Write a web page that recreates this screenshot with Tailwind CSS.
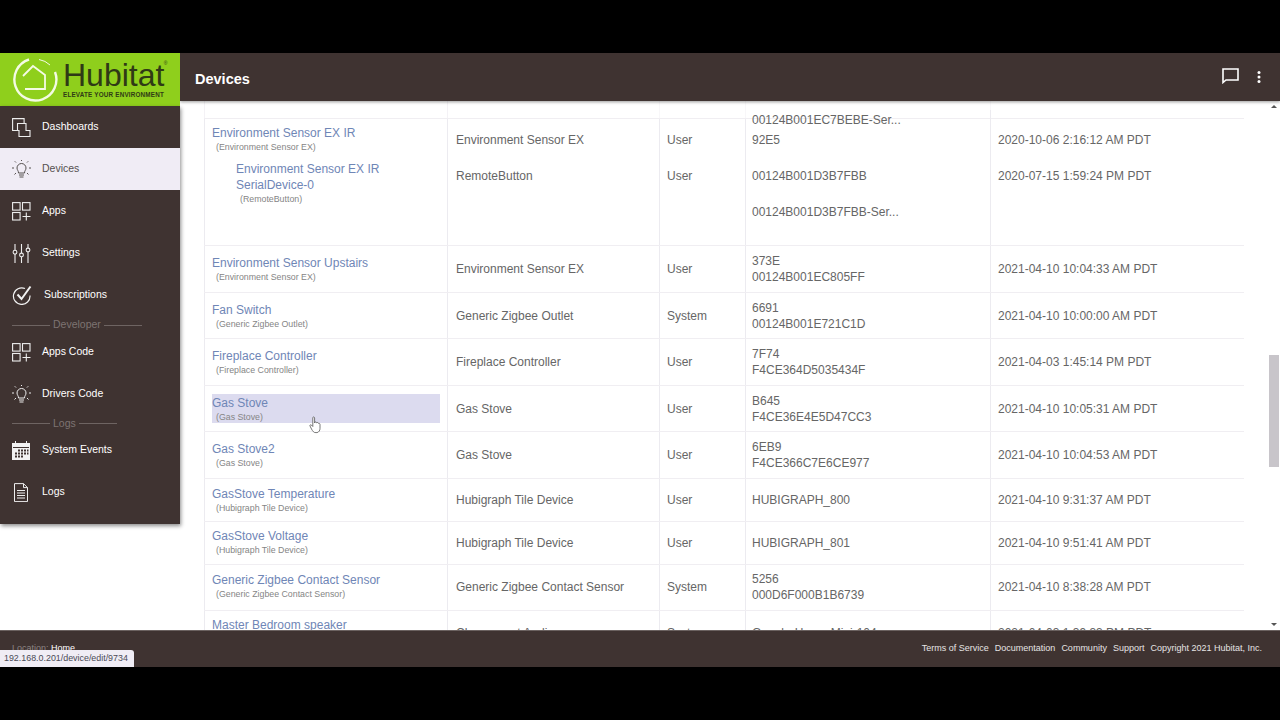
<!DOCTYPE html>
<html lang="en">
<head>
    <meta charset="UTF-8">
    <script src="https://cdn.jsdelivr.net/npm/@tailwindcss/browser@4"></script>
    <title>Devices</title>
</head>
<body class="bg-black font-['Liberation_Sans',Arial,sans-serif]">
<div class="w-[1280px] h-[720px] overflow-hidden pt-[53px]">
  <div class="relative h-[614px] flex flex-col bg-white">
    <div class="flex flex-1 min-h-0">

      <!-- sidebar -->
      <aside class="w-[180px] shrink-0 relative z-20">
        <div class="h-[53px] bg-[#8fcf1c] flex items-center pl-[12px]">
          <svg class="w-[46px] h-[46px] shrink-0" viewBox="0 0 46 46" fill="none" stroke="#f4fbe4">
            <path d="M17 2.500 A21 21 0 1 0 43 15" stroke-width="2.400"/>
            <path d="M27 2.500 A21 21 0 0 1 38 8" stroke-width="1"/>
            <path d="M11 19 L21 9 L33 18 V32 H13" stroke-width="1.800"/>
          </svg>
          <div class="ml-[5px] -mt-[1px] relative text-[#2f3a16]">
            <div class="text-[32px] leading-[32px]">Hubitat</div>
            <div class="text-[6.300px] leading-[8px] font-bold tracking-[0.2px] whitespace-nowrap">ELEVATE YOUR ENVIRONMENT</div>
            <span class="absolute right-[-3px] top-[2px] text-[5px] leading-none">®</span>
          </div>
        </div>
        <nav class="bg-[#3f3331] text-white text-[10.500px] h-[418px] shadow-[1px_2px_4px_rgba(0,0,0,0.45)]">
          <a class="flex items-center h-[42px] pl-[12px]">
            <svg class="w-[19px] h-[19px] mr-[11px]" viewBox="0 0 19 19" fill="none" stroke="#eee" stroke-width="1.100"><path d="M5.500 12.500H.6V.6h11.500v5"/><path d="M5.500 5.500h8.500v7h4v6H7v-6H5.500z"/></svg>
            Dashboards
          </a>
          <a class="flex items-center h-[42px] pl-[12px] bg-[#f0ecf5] text-[#55504f]">
            <svg class="w-[19px] h-[19px] mr-[11px]" viewBox="0 0 19 19" fill="none" stroke="#55504f" stroke-width="1"><path d="M6.500 13c0-2.500-1.500-2.800-1.500-5a4.500 4.500 0 0 1 9 0c0 2.200-1.500 2.500-1.500 5z"/><path d="M7 15h5M7.500 17h4M9.500 1V0M2 8H0M19 8h-2M4 2.500 2.800 1.300M15 2.500l1.200-1.200M4 13l-1.500 1.500M15 13l1.500 1.500"/></svg>
            Devices
          </a>
          <a class="flex items-center h-[42px] pl-[12px]">
            <svg class="w-[19px] h-[19px] mr-[11px]" viewBox="0 0 19 19" fill="none" stroke="#eee" stroke-width="1.100"><rect x=".6" y=".6" width="7.500" height="7.500"/><rect x="10.500" y=".6" width="7.500" height="7.500"/><rect x=".6" y="10.500" width="7.500" height="7.500"/><path d="M14.300 10.500v8M10.500 14.500h8"/></svg>
            Apps
          </a>
          <a class="flex items-center h-[42px] pl-[12px]">
            <svg class="w-[19px] h-[19px] mr-[11px]" viewBox="0 0 19 19" fill="none" stroke="#eee" stroke-width="1.100"><path d="M3 0v6.500M3 10v9M9.500 0v9M9.500 13v6M16 0v4M16 8v11"/><circle cx="3" cy="8.200" r="1.900"/><circle cx="9.500" cy="11" r="1.900"/><circle cx="16" cy="6" r="1.900"/></svg>
            Settings
          </a>
          <a class="flex items-center h-[42px] pl-[12px]">
            <svg class="w-[20px] h-[20px] mr-[12px]" viewBox="0 0 20 20" fill="none" stroke="#f2f2f2"><path d="M13 3.500A8.300 8.300 0 1 0 18 10.500" stroke-width="1.200"/><path d="M5.500 9.500 9.500 14 18.500 1.500" stroke-width="2"/></svg>
            Subscriptions
          </a>
          <div class="flex items-center h-[14px] pl-[12px] pt-[4px] text-[#7d7371] text-[10.500px]">
            <span class="w-[38px] h-px bg-[#6e6462]"></span><span class="px-[3px]">Developer</span><span class="w-[38px] h-px bg-[#6e6462]"></span>
          </div>
          <a class="flex items-center h-[42px] pl-[12px] pt-[2px]">
            <svg class="w-[19px] h-[19px] mr-[11px]" viewBox="0 0 19 19" fill="none" stroke="#eee" stroke-width="1.100"><rect x=".6" y=".6" width="7.500" height="7.500"/><rect x="10.500" y=".6" width="7.500" height="7.500"/><rect x=".6" y="10.500" width="7.500" height="7.500"/><path d="M14.300 10.500v8M10.500 14.500h8"/></svg>
            Apps Code
          </a>
          <a class="flex items-center h-[42px] pl-[12px] pt-[2px]">
            <svg class="w-[19px] h-[19px] mr-[11px]" viewBox="0 0 19 19" fill="none" stroke="#eee" stroke-width="1"><path d="M6.500 13c0-2.500-1.500-2.800-1.500-5a4.500 4.500 0 0 1 9 0c0 2.200-1.500 2.500-1.500 5z"/><path d="M7 15h5M7.500 17h4M9.500 1V0M2 8H0M19 8h-2M4 2.500 2.800 1.300M15 2.500l1.200-1.200M4 13l-1.500 1.500M15 13l1.500 1.500"/></svg>
            Drivers Code
          </a>
          <div class="flex items-center h-[14px] pl-[12px] pt-[5px] text-[#7d7371] text-[10.500px]">
            <span class="w-[38px] h-px bg-[#6e6462]"></span><span class="px-[3px]">Logs</span><span class="w-[38px] h-px bg-[#6e6462]"></span>
          </div>
          <a class="flex items-center h-[42px] pl-[12px] pt-[2px]">
            <svg class="w-[18px] h-[19px] mr-[12px]" viewBox="0 0 18 19"><path fill="#f2f2f2" d="M0 2h3V0h1v2h10V0h1v2h3v17H0z"/><path fill="#3f3331" d="M1 6h16v1H1zM6 8.500h2v2H6zM9 8.500h2v2H9zM12 8.500h2v2h-2zM15 8.500h1.500v2H15zM3 11.500h2v2H3zM6 11.500h2v2H6zM9 11.500h2v2H9zM12 11.500h2v2h-2zM15 11.500h1.500v2H15zM3 14.500h2v2H3zM6 14.500h2v2H6zM9 14.500h2v2H9z"/></svg>
            System Events
          </a>
          <a class="flex items-center h-[42px] pl-[12px] pt-[2px]">
            <svg class="w-[18px] h-[19px] mr-[12px]" viewBox="0 0 18 19" fill="none" stroke="#eee" stroke-width="1"><path d="M2.500.6h9l4 4v14h-13z"/><path d="M11.500.6v4h4M5 7.500h8M5 10h8M5 12.500h8M5 15h8"/></svg>
            Logs
          </a>
        </nav>
      </aside>

      <div class="flex-1 min-w-0 flex flex-col">
        <!-- header -->
        <header class="h-[48px] shrink-0 bg-[#3f3331] flex items-center pl-[15px] text-white relative z-10 shadow-[0_1px_3px_rgba(0,0,0,0.4)]">
          <h1 class="text-[14.500px] font-bold mt-[5px]">Devices</h1>
          <svg class="w-[17px] h-[16px] ml-auto -mt-[2px]" viewBox="0 0 17 16" fill="none" stroke="#fff" stroke-width="1.600"><path d="M1 1h15v11H4l-3 2.500z"/></svg>
          <svg class="w-[4px] h-[12px] ml-[18px] mr-[19px]" viewBox="0 0 4 12" fill="#fff"><circle cx="2" cy="1.500" r="1.500"/><circle cx="2" cy="6" r="1.500"/><circle cx="2" cy="10.500" r="1.500"/></svg>
        </header>

        <!-- device table -->
        <main class="relative flex-1 min-h-0 overflow-hidden text-[12px] text-[#666]">
          <div class="ml-[24px] w-[1040px]">
            <div class="flex h-[18px] border-b border-[#f0eef2]">
              <div class="w-[244px] border-r border-l border-[#f4f2f6]"></div><div class="w-[212px] border-r border-[#f8f7f9]"></div><div class="w-[86px] border-r border-[#f8f7f9]"></div><div class="w-[245px] border-r border-[#f8f7f9]"></div>
            </div>
            <div class="flex h-[127px] border-b border-[#f0eef2]">
              <div class="w-[244px] shrink-0 border-r border-l border-[#ecebf0] pl-[7px] pt-[6px]">
                <a class="block text-[#6f86b6] leading-[16px]">Environment Sensor EX IR</a>
                <div class="text-[8.800px] leading-[12px] text-[#858585] pl-[4px]">(Environment Sensor EX)</div>
                <div class="pl-[24px] pt-[8px] pr-[40px]">
                  <a class="block text-[#6f86b6] leading-[16px]">Environment Sensor EX IR SerialDevice-0</a>
                  <div class="text-[8.800px] leading-[12px] text-[#858585] pl-[4px]">(RemoteButton)</div>
                </div>
              </div>
              <div class="w-[212px] shrink-0 border-r border-[#ecebf0] pl-[8px] pt-[3px]">
                <div class="h-[36px] flex items-center">Environment Sensor EX</div><div class="h-[36px] flex items-center">RemoteButton</div>
              </div>
              <div class="w-[86px] shrink-0 border-r border-[#ecebf0] pl-[7px] pt-[3px]">
                <div class="h-[36px] flex items-center">User</div><div class="h-[36px] flex items-center">User</div>
              </div>
              <div class="w-[245px] shrink-0 border-r border-[#ecebf0] pl-[6px] -mt-[9px]">
                <div class="h-[20px] flex items-center">00124B001EC7BEBE-Ser...</div><div class="h-[20px] flex items-center">92E5</div>
                <div class="h-[36px] mt-[8px] flex items-center">00124B001D3B7FBB</div><div class="h-[36px] flex items-center">00124B001D3B7FBB-Ser...</div>
              </div>
              <div class="pl-[7px] pt-[3px]">
                <div class="h-[36px] flex items-center">2020-10-06 2:16:12 AM PDT</div><div class="h-[36px] flex items-center">2020-07-15 1:59:24 PM PDT</div>
              </div>
            </div>

            <div class="flex h-[47px] border-b border-[#f0eef2] items-stretch">
              <div class="w-[244px] shrink-0 border-r border-l border-[#ecebf0] pl-[7px] pt-[9px]"><a class="block text-[#6f86b6] leading-[16px]">Environment Sensor Upstairs</a><div class="text-[8.800px] leading-[12px] text-[#858585] pl-[4px]">(Environment Sensor EX)</div></div>
              <div class="w-[212px] shrink-0 border-r border-[#ecebf0] pl-[8px] flex items-center">Environment Sensor EX</div>
              <div class="w-[86px] shrink-0 border-r border-[#ecebf0] pl-[7px] flex items-center">User</div>
              <div class="w-[245px] shrink-0 border-r border-[#ecebf0] pl-[6px] flex flex-col justify-center leading-[16px]"><div>373E</div><div>00124B001EC805FF</div></div>
              <div class="pl-[7px] flex items-center">2021-04-10 10:04:33 AM PDT</div>
            </div>

            <div class="flex h-[46px] border-b border-[#f0eef2] items-stretch">
              <div class="w-[244px] shrink-0 border-r border-l border-[#ecebf0] pl-[7px] pt-[9px]"><a class="block text-[#6f86b6] leading-[16px]">Fan Switch</a><div class="text-[8.800px] leading-[12px] text-[#858585] pl-[4px]">(Generic Zigbee Outlet)</div></div>
              <div class="w-[212px] shrink-0 border-r border-[#ecebf0] pl-[8px] flex items-center">Generic Zigbee Outlet</div>
              <div class="w-[86px] shrink-0 border-r border-[#ecebf0] pl-[7px] flex items-center">System</div>
              <div class="w-[245px] shrink-0 border-r border-[#ecebf0] pl-[6px] flex flex-col justify-center leading-[16px]"><div>6691</div><div>00124B001E721C1D</div></div>
              <div class="pl-[7px] flex items-center">2021-04-10 10:00:00 AM PDT</div>
            </div>

            <div class="flex h-[47px] border-b border-[#f0eef2] items-stretch">
              <div class="w-[244px] shrink-0 border-r border-l border-[#ecebf0] pl-[7px] pt-[9px]"><a class="block text-[#6f86b6] leading-[16px]">Fireplace Controller</a><div class="text-[8.800px] leading-[12px] text-[#858585] pl-[4px]">(Fireplace Controller)</div></div>
              <div class="w-[212px] shrink-0 border-r border-[#ecebf0] pl-[8px] flex items-center">Fireplace Controller</div>
              <div class="w-[86px] shrink-0 border-r border-[#ecebf0] pl-[7px] flex items-center">User</div>
              <div class="w-[245px] shrink-0 border-r border-[#ecebf0] pl-[6px] flex flex-col justify-center leading-[16px]"><div>7F74</div><div>F4CE364D5035434F</div></div>
              <div class="pl-[7px] flex items-center">2021-04-03 1:45:14 PM PDT</div>
            </div>

            <div class="flex h-[46px] border-b border-[#f0eef2] items-stretch">
              <div class="w-[244px] shrink-0 border-r border-l border-[#ecebf0] pl-[7px] pr-[7px] pt-[8px]"><div class="bg-[#dcdbef] h-[29px] pt-[1px]"><a class="block text-[#6f86b6] leading-[16px]">Gas Stove</a><div class="text-[8.800px] leading-[12px] text-[#858585] pl-[4px]">(Gas Stove)</div></div></div>
              <div class="w-[212px] shrink-0 border-r border-[#ecebf0] pl-[8px] flex items-center">Gas Stove</div>
              <div class="w-[86px] shrink-0 border-r border-[#ecebf0] pl-[7px] flex items-center">User</div>
              <div class="w-[245px] shrink-0 border-r border-[#ecebf0] pl-[6px] flex flex-col justify-center leading-[16px]"><div>B645</div><div>F4CE36E4E5D47CC3</div></div>
              <div class="pl-[7px] flex items-center">2021-04-10 10:05:31 AM PDT</div>
            </div>

            <div class="flex h-[47px] border-b border-[#f0eef2] items-stretch">
              <div class="w-[244px] shrink-0 border-r border-l border-[#ecebf0] pl-[7px] pt-[9px]"><a class="block text-[#6f86b6] leading-[16px]">Gas Stove2</a><div class="text-[8.800px] leading-[12px] text-[#858585] pl-[4px]">(Gas Stove)</div></div>
              <div class="w-[212px] shrink-0 border-r border-[#ecebf0] pl-[8px] flex items-center">Gas Stove</div>
              <div class="w-[86px] shrink-0 border-r border-[#ecebf0] pl-[7px] flex items-center">User</div>
              <div class="w-[245px] shrink-0 border-r border-[#ecebf0] pl-[6px] flex flex-col justify-center leading-[16px]"><div>6EB9</div><div>F4CE366C7E6CE977</div></div>
              <div class="pl-[7px] flex items-center">2021-04-10 10:04:53 AM PDT</div>
            </div>

            <div class="flex h-[43px] border-b border-[#f0eef2] items-stretch">
              <div class="w-[244px] shrink-0 border-r border-l border-[#ecebf0] pl-[7px] pt-[7px]"><a class="block text-[#6f86b6] leading-[16px]">GasStove Temperature</a><div class="text-[8.800px] leading-[12px] text-[#858585] pl-[4px]">(Hubigraph Tile Device)</div></div>
              <div class="w-[212px] shrink-0 border-r border-[#ecebf0] pl-[8px] flex items-center pb-[1px]">Hubigraph Tile Device</div>
              <div class="w-[86px] shrink-0 border-r border-[#ecebf0] pl-[7px] flex items-center pb-[1px]">User</div>
              <div class="w-[245px] shrink-0 border-r border-[#ecebf0] pl-[6px] flex items-center pb-[1px]">HUBIGRAPH_800</div>
              <div class="pl-[7px] flex items-center pb-[1px]">2021-04-10 9:31:37 AM PDT</div>
            </div>

            <div class="flex h-[43px] border-b border-[#f0eef2] items-stretch">
              <div class="w-[244px] shrink-0 border-r border-l border-[#ecebf0] pl-[7px] pt-[6px]"><a class="block text-[#6f86b6] leading-[16px]">GasStove Voltage</a><div class="text-[8.800px] leading-[12px] text-[#858585] pl-[4px]">(Hubigraph Tile Device)</div></div>
              <div class="w-[212px] shrink-0 border-r border-[#ecebf0] pl-[8px] flex items-center pb-[1px]">Hubigraph Tile Device</div>
              <div class="w-[86px] shrink-0 border-r border-[#ecebf0] pl-[7px] flex items-center pb-[1px]">User</div>
              <div class="w-[245px] shrink-0 border-r border-[#ecebf0] pl-[6px] flex items-center pb-[1px]">HUBIGRAPH_801</div>
              <div class="pl-[7px] flex items-center pb-[1px]">2021-04-10 9:51:41 AM PDT</div>
            </div>

            <div class="flex h-[46px] border-b border-[#f0eef2] items-stretch">
              <div class="w-[244px] shrink-0 border-r border-l border-[#ecebf0] pl-[7px] pt-[7px]"><a class="block text-[#6f86b6] leading-[16px]">Generic Zigbee Contact Sensor</a><div class="text-[8.800px] leading-[12px] text-[#858585] pl-[4px]">(Generic Zigbee Contact Sensor)</div></div>
              <div class="w-[212px] shrink-0 border-r border-[#ecebf0] pl-[8px] flex items-center pb-[1px]">Generic Zigbee Contact Sensor</div>
              <div class="w-[86px] shrink-0 border-r border-[#ecebf0] pl-[7px] flex items-center pb-[1px]">System</div>
              <div class="w-[245px] shrink-0 border-r border-[#ecebf0] pl-[6px] flex flex-col justify-center leading-[16px] pb-[1px]"><div>5256</div><div>000D6F000B1B6739</div></div>
              <div class="pl-[7px] flex items-center pb-[1px]">2021-04-10 8:38:28 AM PDT</div>
            </div>

            <div class="flex h-[46px] items-stretch">
              <div class="w-[244px] shrink-0 border-r border-l border-[#ecebf0] pl-[7px] pt-[6px]"><a class="block text-[#6f86b6] leading-[16px]">Master Bedroom speaker</a></div>
              <div class="w-[212px] shrink-0 border-r border-[#ecebf0] pl-[8px] pt-[13px]">Chromecast Audio</div>
              <div class="w-[86px] shrink-0 border-r border-[#ecebf0] pl-[7px] pt-[13px]">System</div>
              <div class="w-[245px] shrink-0 border-r border-[#ecebf0] pl-[6px] pt-[13px]">Google-Home-Mini-104</div>
              <div class="pl-[7px] pt-[13px]">2021-04-03 1:39:33 PM PDT</div>
            </div>
          </div>

          <!-- scrollbar -->
          <div class="absolute right-0 top-0 bottom-0 w-[12px] bg-white">
            <div class="absolute left-[3px] top-[4px] w-0 h-0 border-x-[3px] border-x-transparent border-b-[3px] border-b-[#555]"></div>
            <div class="absolute left-[1px] top-[254px] w-[10px] h-[112px] bg-[#c8c5ca]"></div>
            <div class="absolute left-[3px] bottom-[4px] w-0 h-0 border-x-[3px] border-x-transparent border-t-[3px] border-t-[#555]"></div>
          </div>

          <!-- mouse pointer -->
          <svg class="absolute left-[129px] top-[315px] w-[14px] h-[18px]" viewBox="0 0 14 18" fill="#fff" stroke="#555" stroke-width="0.800"><path d="M4 1.200c.8-.6 1.600 0 1.600.8v5l.5-1c.8-.3 1.300 0 1.500.8l.4-.2c.8-.3 1.300 0 1.500.8.800-.3 1.500.2 1.500 1v4c0 2-1 3.800-3 4.200H7C5 17 3.500 15 2.500 13L1 10c-.4-1 .6-1.600 1.400-1l1.400 1.500V2c0-.4 0-.6.200-.8z"/></svg>
        </main>
      </div>
    </div>

    <!-- footer -->
    <footer class="h-[37px] shrink-0 bg-[#3f3331] relative z-30 flex items-center justify-end pr-[18px] gap-[6px] text-[9px] text-[#e6e4e4] border-t border-[#6b6260]">
      <span class="absolute left-[12px] top-[11px] text-[#8d8583] whitespace-nowrap">Location: <span class="text-white">Home</span></span>
      <span>Terms of Service</span><span>Documentation</span><span>Community</span><span>Support</span><span>Copyright 2021 Hubitat, Inc.</span>
      <div class="absolute left-0 bottom-0 w-[134px] h-[17px] bg-[#f0edf5] rounded-tr-[3px] text-[#4a4a55] text-[8.900px] leading-[17px] pl-[4px] whitespace-nowrap">192.168.0.201/device/edit/9734</div>
    </footer>
  </div>
</div>
</body>
</html>
